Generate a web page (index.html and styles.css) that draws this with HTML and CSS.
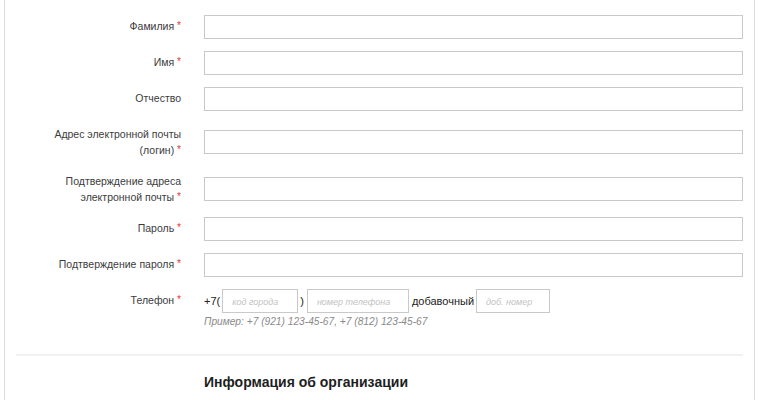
FILE: index.html
```html
<!DOCTYPE html>
<html lang="ru">
<head>
<meta charset="utf-8">
<title>Регистрация</title>
<link rel="stylesheet" href="styles.css">
</head>
<body>
<div class="panel">
  <form class="form">
    <div class="row">
      <label class="label">Фамилия <span class="req">*</span></label>
      <div class="field"><input class="input" type="text"></div>
    </div>
    <div class="row">
      <label class="label">Имя <span class="req">*</span></label>
      <div class="field"><input class="input" type="text"></div>
    </div>
    <div class="row">
      <label class="label">Отчество</label>
      <div class="field"><input class="input" type="text"></div>
    </div>
    <div class="row row-tall">
      <label class="label">Адрес электронной почты<br>(логин) <span class="req">*</span></label>
      <div class="field"><input class="input" type="text"></div>
    </div>
    <div class="row row-tall">
      <label class="label">Подтверждение адреса<br>электронной почты <span class="req">*</span></label>
      <div class="field"><input class="input" type="text"></div>
    </div>
    <div class="row">
      <label class="label">Пароль <span class="req">*</span></label>
      <div class="field"><input class="input" type="password"></div>
    </div>
    <div class="row">
      <label class="label">Подтверждение пароля <span class="req">*</span></label>
      <div class="field"><input class="input" type="password"></div>
    </div>
    <div class="row row-phone">
      <label class="label label-phone">Телефон <span class="req">*</span></label>
      <div class="field">
        <div class="phone">
          <span class="phone-text phone-prefix">+7(</span>
          <input class="input input-code" type="text" placeholder="код города">
          <span class="phone-text phone-close">)</span>
          <input class="input input-number" type="text" placeholder="номер телефона">
          <span class="phone-text">добавочный</span>
          <input class="input input-ext" type="text" placeholder="доб. номер">
        </div>
        <div class="hint">Пример: +7 (921) 123-45-67, +7 (812) 123-45-67</div>
      </div>
    </div>
  </form>
  <hr class="divider">
  <div class="section">
    <h2 class="section-title">Информация об организации</h2>
  </div>
</div>
</body>
</html>
```
FILE: styles.css
```css
html, body {
  margin: 0;
  padding: 0;
  background: #fff;
}

body {
  font-family: "Liberation Sans", Arial, sans-serif;
  font-size: 11px;
  color: #3a3a3a;
}

.panel {
  margin: 0 3px 0 4px;
  border-left: 1px solid #dcdcdc;
  border-right: 1px solid #dcdcdc;
  padding: 15px 11px 0 11px;
  min-height: 400px;
  box-sizing: border-box;
}

.form {
  display: flex;
  flex-direction: column;
}

.row {
  display: flex;
  align-items: center;
  margin-bottom: 12px;
}

.row-tall {
  margin-top: 3px;
}

.label {
  flex: 0 0 165px;
  text-align: right;
  line-height: 16px;
  font-size: 10.5px;
  color: #3c3c3c;
  padding-bottom: 2px;
}

.row-tall .label {
  padding-bottom: 0;
}

.req {
  color: #d9393a;
  font-size: 10px;
  vertical-align: 1px;
}

.field {
  flex: 1;
  margin-left: 23px;
}

.input {
  display: block;
  box-sizing: border-box;
  width: 100%;
  height: 24px;
  margin: 0;
  border: 1px solid #c9c9c9;
  background: #fff;
  font-family: inherit;
  font-size: 11px;
  padding: 0 9px;
  outline: none;
}

.input::placeholder {
  color: #c2c2c2;
  font-style: italic;
  font-size: 9px;
}

.row-phone {
  align-items: flex-start;
}

.label-phone {
  padding-top: 3px;
}

.phone {
  display: flex;
  align-items: center;
}

.phone-text {
  color: #222;
  font-size: 11px;
}

.phone-prefix {
  margin-right: 2px;
}

.phone-close {
  margin: 0 3px 0 2px;
}

.input-code {
  width: 76px;
}

.input-number {
  width: 102px;
  margin-right: 3px;
}

.input-ext {
  width: 74px;
  margin-left: 2px;
}

.hint {
  margin-top: 1px;
  font-style: italic;
  font-size: 10.2px;
  color: #8a8a8a;
  line-height: 16px;
}

.divider {
  margin: 12px 0 0 0;
  border: 0;
  border-top: 2px solid #f1f1f1;
  height: 0;
}

.section {
  padding-left: 188px;
}

.section-title {
  margin: 16px 0 0 0;
  font-size: 14px;
  font-weight: bold;
  color: #1e1e1e;
  line-height: 20px;
}
```
